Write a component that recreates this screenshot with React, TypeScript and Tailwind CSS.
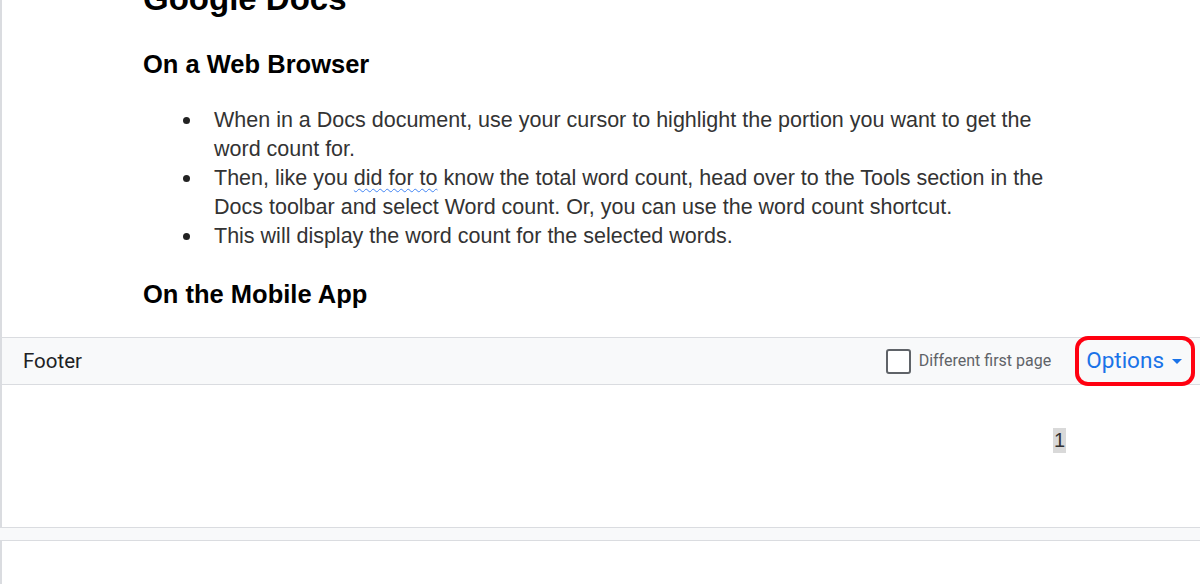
import { useState } from 'react'

const bullets = [
  {
    id: 'b1',
    body: <>When in a Docs document, use your cursor to highlight the portion you want to get the word count for.</>,
  },
  {
    id: 'b2',
    body: (
      <>
        Then, like you{' '}
        <span className="underline decoration-wavy decoration-[#4285f4] decoration-1 underline-offset-[3px]">did for to</span>{' '}
        know the total word count, head over to the Tools section in the Docs toolbar and select Word count. Or, you can use the word count shortcut.
      </>
    ),
  },
  {
    id: 'b3',
    body: <>This will display the word count for the selected words.</>,
  },
]

export default function App() {
  const [firstPage, setFirstPage] = useState(false)

  return (
    <div className="h-[584px] overflow-hidden bg-[#f8f9fa]">
      {/* Page */}
      <div className="h-[528px] bg-white border-l-2 border-b border-[#dadce0] flex flex-col">
        {/* Document body */}
        <div className="pl-[141px] h-[337px] text-[#202124] font-['Liberation_Sans',Arial,sans-serif]">
          <h1 className="-mt-[21px] text-[33px] font-bold leading-[40px] text-black">Google Docs</h1>
          <h2 className="mt-[30px] text-[25.5px] font-bold leading-[30px] text-black">On a Web Browser</h2>
          <ul className="mt-[27px]">
            {bullets.map(b => (
              <li key={b.id} className="flex text-[21.5px] leading-[29px] text-[#333]">
                <span className="w-[71px] shrink-0 pl-[40px] pt-[11px]">
                  <span className="block w-[7px] h-[7px] rounded-full bg-[#222]" />
                </span>
                <span className="w-[845px]">{b.body}</span>
              </li>
            ))}
          </ul>
          <h2 className="mt-[28px] text-[25.5px] font-bold leading-[30px] text-black">On the Mobile App</h2>
        </div>

        {/* Footer bar */}
        <div className="h-[48px] bg-[#f8f9fa] border-y border-[#dadce0] flex items-center pl-[21px] pr-[5px] font-['Roboto',sans-serif]">
          <span className="text-[20.5px] text-[#202124]">Footer</span>
          <label className="ml-auto flex items-center gap-[8px] cursor-pointer">
            <input
              type="checkbox"
              checked={firstPage}
              onChange={e => setFirstPage(e.target.checked)}
              className="appearance-none w-[25px] h-[25px] border-2 border-[#5f6368] rounded-[3px] bg-white"
            />
            <span className="text-[16px] text-[#5f6368]">Different first page</span>
          </label>
          <button className="ml-[24px] h-[50px] flex items-center gap-[8px] pl-[7px] pr-[9px] border-4 border-[#ff0010] rounded-[13px] text-[22.5px] text-[#1a73e8]">
            Options
            <svg width="10" height="5" viewBox="0 0 10 5">
              <path d="M0 0h10L5 5z" fill="#1a73e8" />
            </svg>
          </button>
        </div>

        {/* Footer body */}
        <div className="flex-1 flex justify-end pr-[134px] pt-[43px] font-['Liberation_Sans',Arial,sans-serif]">
          <span className="h-[25px] px-[1px] bg-[#d9d9d9] text-[20px] leading-[25px] text-[#333]">1</span>
        </div>
      </div>

      {/* Next page */}
      <div className="mt-[12px] h-[60px] bg-white border-l-2 border-t border-[#dadce0]" />
    </div>
  )
}
